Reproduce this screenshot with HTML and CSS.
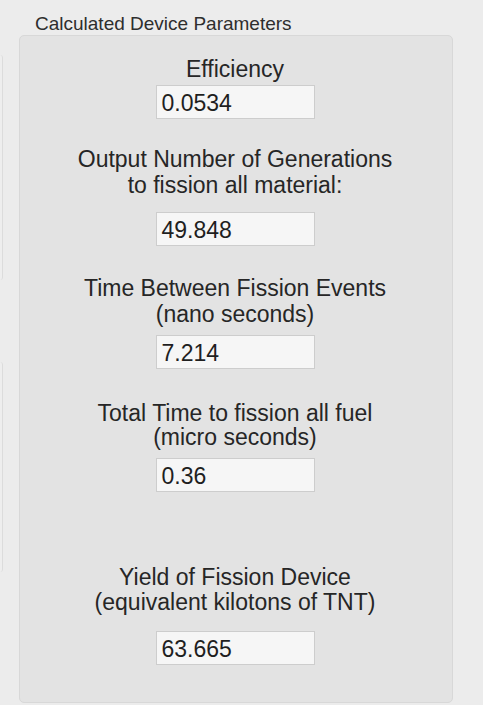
FILE: index.html
```html
<!DOCTYPE html>
<html>
<head>
<meta charset="utf-8">
<link rel="stylesheet" href="styles.css">
</head>
<body>
<div class="page">
  <div class="side">
    <div class="side-box side-a"></div>
    <div class="side-box side-b"></div>
  </div>
  <div class="main">
    <div class="group-title">Calculated Device Parameters</div>
    <div class="panel">
      <div class="label l-eff">Efficiency</div>
      <div class="field f-eff">0.0534</div>
      <div class="label l-gen">Output Number of Generations<br>to fission all material:</div>
      <div class="field f-gen">49.848</div>
      <div class="label l-time">Time Between Fission Events<br>(nano seconds)</div>
      <div class="field f-time">7.214</div>
      <div class="label l-total">Total Time to fission all fuel<br>(micro seconds)</div>
      <div class="field f-total">0.36</div>
      <div class="label l-yield">Yield of Fission Device<br>(equivalent kilotons of TNT)</div>
      <div class="field f-yield">63.665</div>
    </div>
  </div>
</div>
</body>
</html>
```
FILE: styles.css
```css
html, body {
  margin: 0;
  padding: 0;
  background: #ececec;
  font-family: "Liberation Sans", Arial, sans-serif;
  width: 483px;
  height: 705px;
  overflow: hidden;
}
.page {
  display: flex;
  flex-direction: row;
}
.side {
  width: 3px;
  display: flex;
  flex-direction: column;
}
.side-box {
  background: #eeeeee;
  border-right: 1px solid #dcdcdc;
  border-radius: 0 3px 3px 0;
  box-sizing: border-box;
}
.side-a {
  margin-top: 55px;
  height: 225px;
}
.side-b {
  margin-top: 82px;
  height: 210px;
}
.main {
  margin-left: 16px;
  display: flex;
  flex-direction: column;
}
.group-title {
  margin-top: 13px;
  padding-left: 16px;
  height: 22px;
  line-height: 22px;
  font-size: 19px;
  color: #2e2e2e;
}
.panel {
  box-sizing: border-box;
  width: 434px;
  height: 668px;
  background: #e3e3e3;
  border: 1px solid #d8d8d8;
  border-radius: 5px;
  display: flex;
  flex-direction: column;
  align-items: center;
  padding-top: 20px;
  padding-right: 2px;
}
.label {
  font-size: 23px;
  line-height: 26px;
  color: #262626;
  text-align: center;
  white-space: nowrap;
}
.field {
  box-sizing: border-box;
  width: 159px;
  height: 34px;
  background: #f6f6f6;
  border: 1px solid #cdcdcd;
  font-size: 23px;
  line-height: 34px;
  padding-left: 5px;
  color: #1f1f1f;
}
.f-eff { margin-top: 3px; }
.l-gen { margin-top: 27px; }
.f-gen { margin-top: 14px; }
.l-time { margin-top: 29px; }
.f-time { margin-top: 8px; }
.l-total { margin-top: 32px; line-height: 24px; }
.f-total { margin-top: 9px; }
.l-yield { margin-top: 73px; line-height: 25px; }
.f-yield { margin-top: 16px; }
```
